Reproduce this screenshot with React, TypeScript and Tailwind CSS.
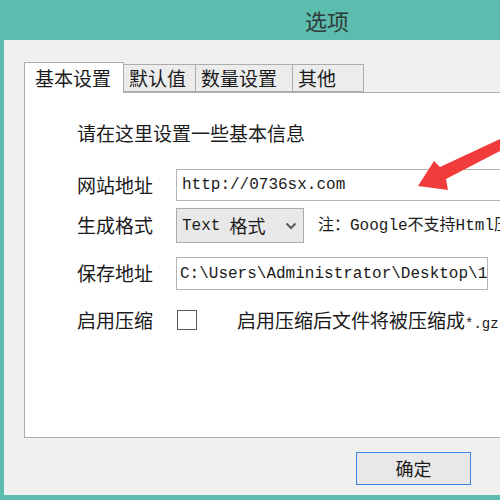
const cjk = "font-['Microsoft_YaHei','Noto_Sans_CJK_SC',sans-serif]";
const mono = "font-['SimSun','Liberation_Mono','Noto_Sans_CJK_SC',monospace]";

const tabs = [
  { label: "默认值", w: "w-[72px]" },
  { label: "数量设置", w: "w-[97px]" },
  { label: "其他", w: "w-[71px]" },
];

function Arrow() {
  return (
    <svg className="absolute left-[400px] top-[120px]" width="100" height="80" viewBox="0 0 100 80">
      <polygon
        points="18,66 34,41 40,47 100,19 100,31 46,59 48,70"
        fill="#f23c3c"
      />
    </svg>
  );
}

export default function App() {
  return (
    <div className={`relative w-[500px] h-[500px] overflow-hidden bg-[#5cbcae] ${cjk}`}>
      <div className="h-[40px] flex items-center pl-[305px] text-[22px] text-[#2f3b38]">选项</div>

      <div className="ml-[4px] w-[620px] h-[455px] bg-[#f0f0f0] pt-[21px] pl-[20px]">
        {/* tab strip */}
        <div className="flex items-end h-[31px] text-[19px] text-[#1a1a1a]">
          <div className="h-[31px] w-[100px] pl-[10px] bg-white border border-b-0 border-[#adadad] flex items-center relative z-10 -mb-px">
            基本设置
          </div>
          {tabs.map((t) => (
            <div
              key={t.label}
              className={`${t.w} h-[28px] pl-[5px] bg-[#ececec] border border-[#adadad] border-l-0 flex items-center`}
            >
              {t.label}
            </div>
          ))}
        </div>

        {/* panel */}
        <div className="w-[620px] h-[346px] bg-white border border-[#adadad] pl-[52px] pt-[27px] text-[19px] text-[#1a1a1a]">
          <div className="h-[26px] leading-[26px]">请在这里设置一些基本信息</div>

          <div className="flex items-center mt-[23px] h-[32px]">
            <div className="w-[99px]">网站地址</div>
            <div className={`w-[340px] h-[32px] border border-[#b4b4b4] bg-white flex items-center pl-[5px] text-[16px] ${mono}`}>
              http://0736sx.com
            </div>
          </div>

          <div className="flex items-center mt-[7px] h-[35px]">
            <div className="w-[99px]">生成格式</div>
            <div className="w-[128px] h-[35px] border border-[#acacac] bg-[#e8e8e8] flex items-center pl-[5px] pr-[6px]">
              <span className={`text-[16px] ${mono}`}>Text</span>
              <span className="ml-[9px] text-[18px]">格式</span>
              <svg className="ml-auto" width="12" height="8" viewBox="0 0 12 8">
                <path d="M1.5 1.5 L6 6 L10.5 1.5" fill="none" stroke="#5a5a5a" strokeWidth="2" />
              </svg>
            </div>
            <div className={`ml-[14px] text-[16px] whitespace-nowrap ${mono}`}>注：Google不支持Html压缩</div>
          </div>

          <div className="flex items-center mt-[14px] h-[33px]">
            <div className="w-[99px]">保存地址</div>
            <div className={`w-[312px] h-[33px] border border-[#b4b4b4] bg-white flex items-center pl-[3px] text-[16px] whitespace-nowrap ${mono}`}>
              C:\Users\Administrator\Desktop\1
            </div>
          </div>

          <div className="flex items-center mt-[14px] h-[32px]">
            <div className="w-[100px]">启用压缩</div>
            <div className="w-[20px] h-[20px] border border-[#5a5a5a] bg-white" />
            <div className="ml-[40px] whitespace-nowrap">
              启用压缩后文件将被压缩成<span className={`text-[14px] ${mono}`}>*.gz</span>
            </div>
          </div>
        </div>

        <div className="pl-[332px] pt-[14px]">
          <button className="w-[115px] h-[33px] border border-[#3c86e0] bg-[#e8e8e8] text-[18px] text-[#1a1a1a] flex items-center justify-center">
            确定
          </button>
        </div>
      </div>

      <Arrow />
    </div>
  );
}
